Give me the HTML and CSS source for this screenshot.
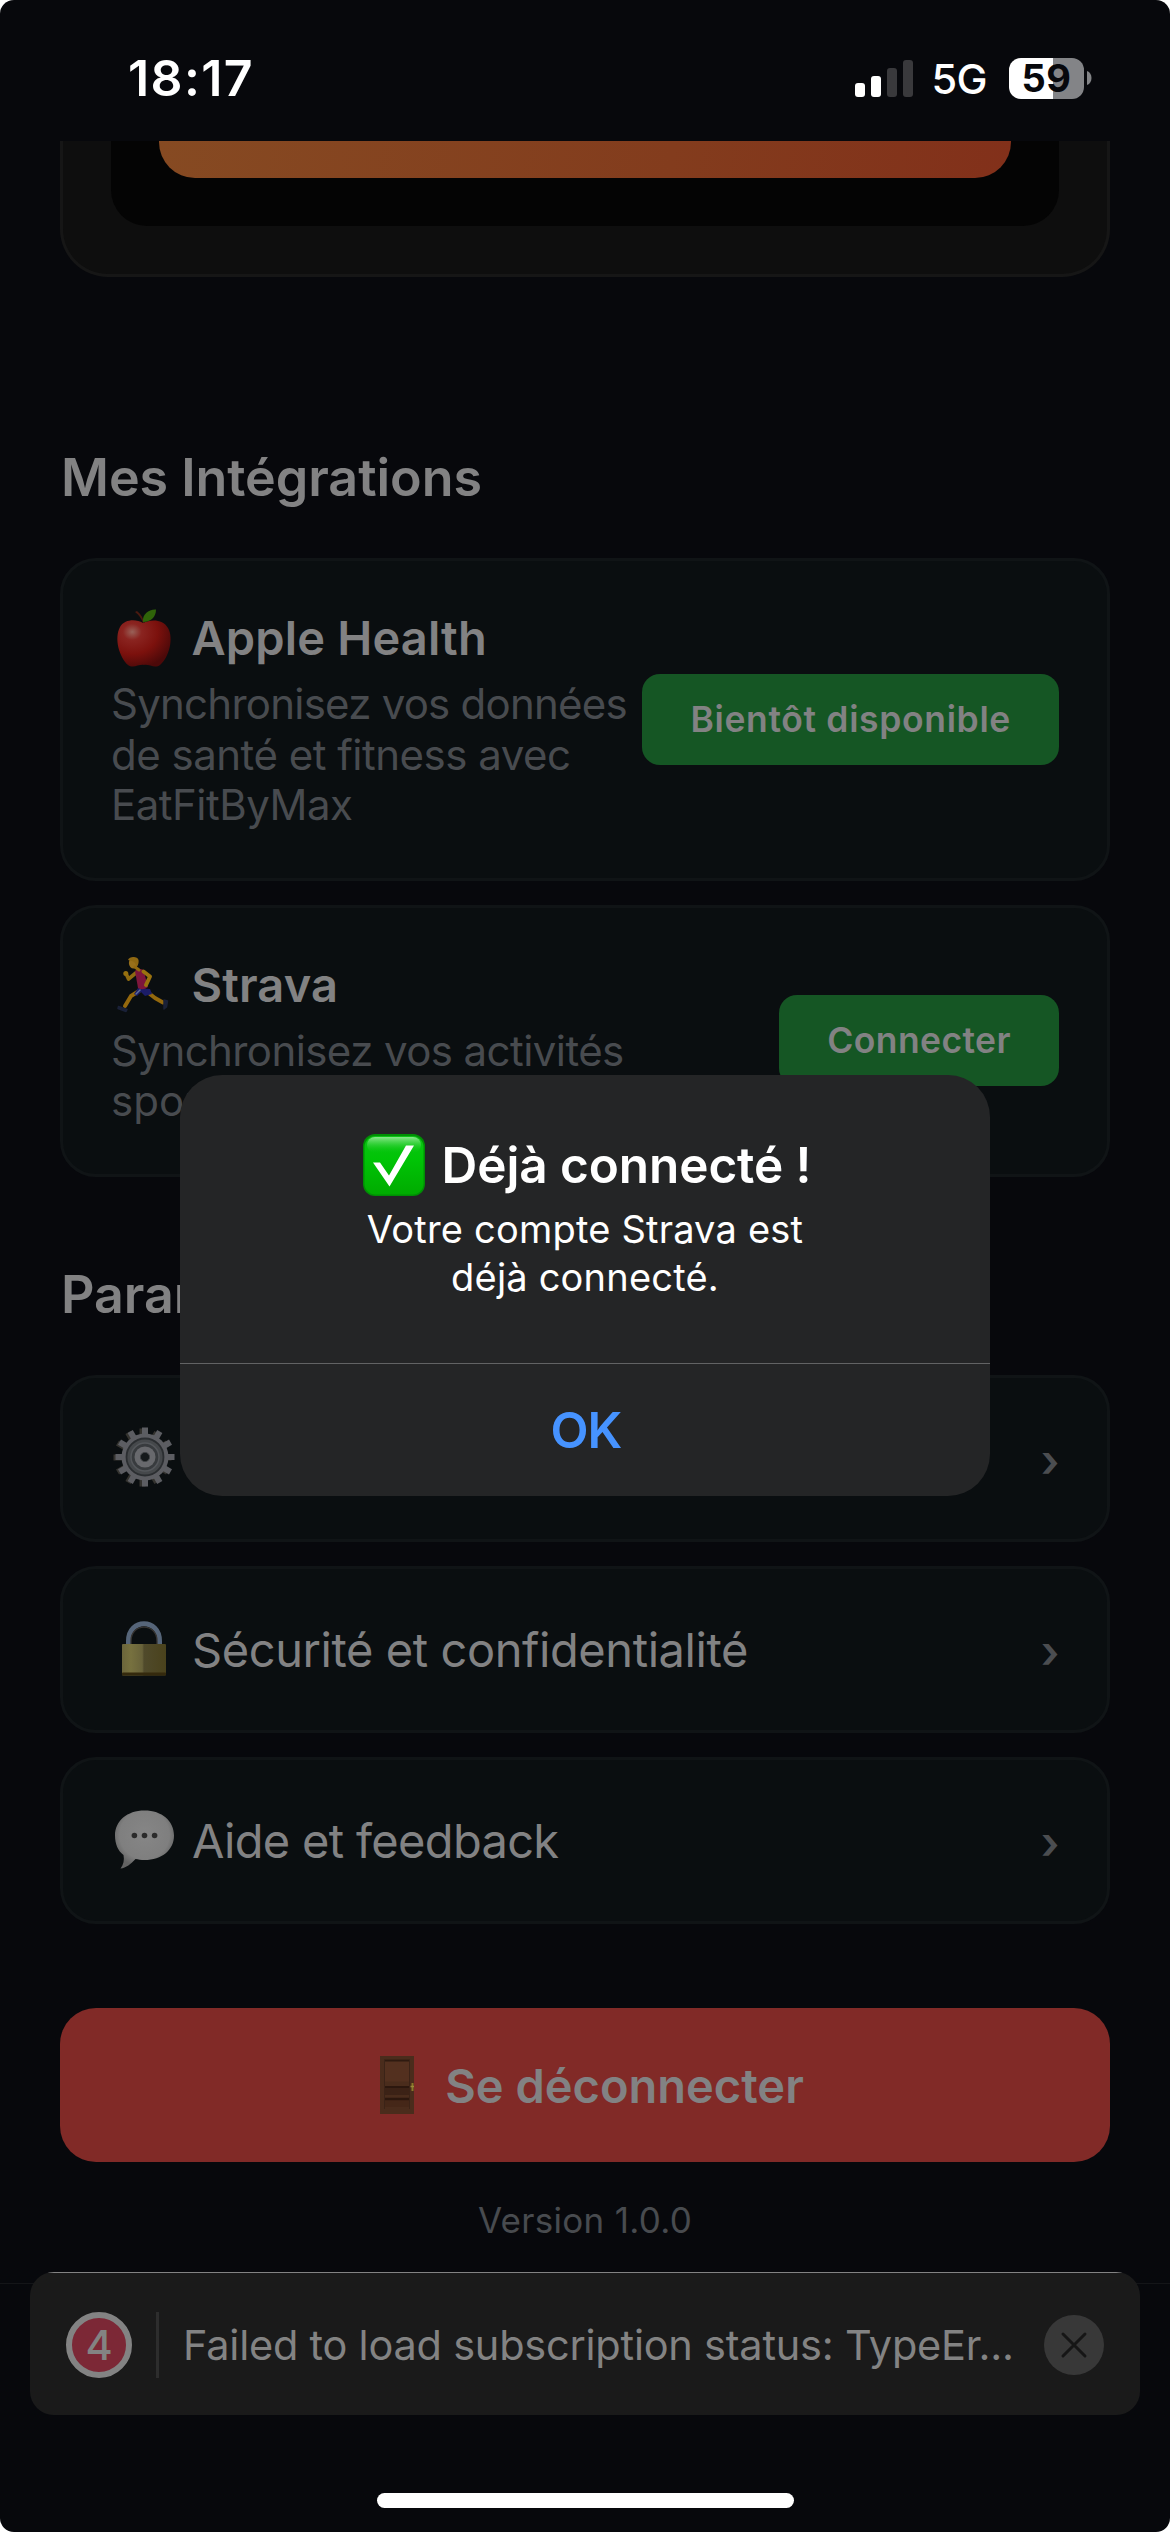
FILE: index.html
```html
<!DOCTYPE html>
<html lang="fr">
<head>
<meta charset="utf-8">
<title>EatFitByMax</title>
<link rel="stylesheet" href="styles.css">
</head>
<body>
<div class="screen">
  <header class="status">
    <span class="time">18:17</span>
    <div class="status-right">
      <svg class="signal" width="58" height="37" viewBox="0 0 58 37">
        <rect x="0" y="23" width="10" height="14" rx="3" fill="#fff"/>
        <rect x="16" y="16" width="10" height="21" rx="3" fill="#fff"/>
        <rect x="32" y="8" width="10" height="29" rx="3" fill="#39393c"/>
        <rect x="48" y="0" width="10" height="37" rx="3" fill="#39393c"/>
      </svg>
      <span class="network">5G</span>
      <span class="battery">59</span>
      <svg class="nub" width="5" height="14" viewBox="0 0 5 14"><path d="M0 0C6 2 6 12 0 14z" fill="#838487"/></svg>
    </div>
  </header>

  <main class="content">
    <section class="offer"><div class="offer-inner"><div class="offer-cta"></div></div></section>

    <h2 class="heading first">Mes Intégrations</h2>
    <div class="stack">
      <article class="card integration">
        <div class="info">
          <h3 class="title">
            <svg class="icon" viewBox="0 0 63 60">
              <defs>
                <radialGradient id="apple" cx=".28" cy=".25" r=".8"><stop offset="0" stop-color="#996158"/><stop offset=".22" stop-color="#8a2420"/><stop offset=".6" stop-color="#7c110d"/><stop offset="1" stop-color="#4c0909"/></radialGradient>
              </defs>
              <path d="M32 15C25 11 14 11 9 19C3 30 8 49 17 57C22 61 28 56 33 57C38 56 44 61 49 57C58 50 63 30 57 20C52 11 40 11 32 15z" fill="url(#apple)"/>
              <path d="M32 15C30 10 28 7 24 4L26 3C30 6 32 10 33.500 15z" fill="#4a1a10"/>
              <path d="M32 14C31 6 38 1 45 1.500C45 9 40 14 32 14z" fill="#2f6409"/>
            </svg>
            <span>Apple Health</span>
          </h3>
          <p class="desc"><span>Synchronisez vos données</span><br>de santé et fitness avec<br>EatFitByMax</p>
        </div>
        <button class="action soon">Bientôt disponible</button>
      </article>

      <article class="card integration">
        <div class="info">
          <h3 class="title">
            <svg class="icon" viewBox="0 0 63 60" fill="none" stroke-linecap="round" stroke-linejoin="round">
              <path d="M26 18L17.500 25L15 19.500" stroke="#8e6a10" stroke-width="3.600"/>
              <circle cx="14.800" cy="19.500" r="2.500" fill="#96700f"/>
              <path d="M28 37L20 42L14 52" stroke="#94680d" stroke-width="4"/>
              <path d="M37 38.500L44 44L52 48.500" stroke="#94680d" stroke-width="4"/>
              <path d="M7.500 52.500L16 55.500L15 57.500L7 54.500z" fill="#1a2138" stroke="#1a2138" stroke-width="1.500"/>
              <path d="M53 46L56.500 47L55.500 53L53 55z" fill="#1a2138" stroke="#1a2138" stroke-width="1.500"/>
              <path d="M27 34L39 35L41 40L34 42L30 38L26 42L23 40z" fill="#1b1c68"/>
              <path d="M29 36L25 40" stroke="#5e6f9b" stroke-width="1.500"/>
              <path d="M24 17Q28 13.500 32.500 16L37 33Q32 37 27 34z" fill="#7d163c"/>
              <path d="M32.500 17.500L39 22.500L35 31" stroke="#9a720f" stroke-width="4"/>
              <ellipse cx="22.500" cy="9" rx="4.600" ry="5.600" fill="#98701a"/>
              <path d="M17 6C18 2 27 2 27.500 6C28 9 27 12 25 12C25 9 23 7 17 6z" fill="#8f6812"/>
              <path d="M24 13L28 16" stroke="#93690f" stroke-width="3"/>
            </svg>
            <span>Strava</span>
          </h3>
          <p class="desc"><span class="activities">Synchronisez vos activités</span><br><span class="sport">sportives</span></p>
        </div>
        <button class="action">Connecter</button>
      </article>
    </div>

    <h2 class="heading second">Paramètres</h2>
    <nav class="stack">
      <a class="card row">
        <svg class="icon" viewBox="0 0 63 60">
          <g stroke="#34332f" stroke-width="6" transform="translate(-1.500 .5)"><path d="M33 0V58M4 29H62M18.500 4L47.500 54M47.500 4L18.500 54M8 14.500L58 43.500M58 14.500L8 43.500"/></g>
          <g stroke="#5c5d62" stroke-width="6"><path d="M34 -0.500V58.500M4.500 29H63.500M19.200 3.500L48.800 54.500M48.800 3.500L19.200 54.500M8.500 14.200L59.500 43.800M59.500 14.200L8.500 43.800"/></g>
          <circle cx="34" cy="29" r="23.500" fill="#5c5d62"/>
          <circle cx="34" cy="29" r="18.500" fill="#45484b" stroke="#2b2e31" stroke-width="1.800"/>
          <circle cx="34" cy="29" r="14" fill="#383b3e" stroke="#54575b" stroke-width="1.500"/>
          <circle cx="34" cy="29" r="10.500" fill="#68696d"/>
          <circle cx="34" cy="29" r="4.600" fill="#15191b" stroke="#3f4245" stroke-width="1"/>
        </svg>
        <span>Paramètres</span><span class="chevron">›</span>
      </a>
      <a class="card row">
        <svg class="icon" viewBox="0 0 63 60">
          <defs><linearGradient id="brass"><stop offset="0" stop-color="#6b653b"/><stop offset=".2" stop-color="#77713f"/><stop offset=".46" stop-color="#68623a"/><stop offset=".5" stop-color="#504a2b"/><stop offset="1" stop-color="#4a421c"/></linearGradient></defs>
          <path d="M17.500 27V22C17.500 -1 48.500 -1 48.500 22V27" fill="none" stroke="#566579" stroke-width="5"/>
          <path d="M20 27V22C20 3.500 46 3.500 46 22V27" fill="none" stroke="#383532" stroke-width="1.300"/>
          <rect x="11" y="25" width="44" height="31.500" rx="1" fill="url(#brass)"/>
          <rect x="11" y="53.500" width="44" height="3" rx="1" fill="#34290d"/>
        </svg>
        <span class="security">Sécurité et confidentialité</span><span class="chevron">›</span>
      </a>
      <a class="card row">
        <svg class="icon" viewBox="0 0 63 60">
          <defs><radialGradient id="bubble" cx=".5" cy=".42" r=".56"><stop offset="0" stop-color="#868686"/><stop offset=".75" stop-color="#7f7f7f"/><stop offset="1" stop-color="#636363"/></radialGradient></defs>
          <path d="M33.500 .5C51 .5 63 11 63 25.500C63 40 51 50 33.500 50C30 50 27 49.500 24.500 49C20 54 15 58 9.500 58.500C12.500 54.500 13.500 50 12.500 45C7 41 4 34 4 25.500C4 11 16 .5 33.500 .5z" fill="url(#bubble)"/>
          <g fill="#2b2b2b"><circle cx="23.400" cy="25.500" r="2.800"/><circle cx="33.500" cy="25.500" r="2.800"/><circle cx="43.600" cy="25.500" r="2.800"/></g>
        </svg>
        <span class="help">Aide et feedback</span><span class="chevron">›</span>
      </a>
    </nav>

    <button class="logout">
      <svg width="60" height="60" viewBox="0 0 60 60">
        <rect x="12" y="1" width="34" height="58" fill="#4a2c1c"/>
        <rect x="16.500" y="4.500" width="25" height="22" fill="#53301f"/><path d="M16.500 5.500H41.500" stroke="#2f1a10" stroke-width="2"/>
        <rect x="16.500" y="32" width="25" height="8" fill="#3c2216"/><path d="M16.500 32H41.500" stroke="#2c170e" stroke-width="2"/>
        <rect x="16.500" y="44" width="25" height="8" fill="#452718"/><path d="M16.500 44H41.500" stroke="#2c170e" stroke-width="2.500"/>
        <path d="M16.500 4.500V54M41.500 4.500V54" stroke="#3b2317" stroke-width="1"/>
        <path d="M44.500 28V36" stroke="#8a7728" stroke-width="2"/><path d="M42.500 31.500H46" stroke="#9a8a38" stroke-width="1.500"/>
      </svg>
      <span>Se déconnecter</span>
    </button>
    <p class="version">Version 1.0.0</p>
  </main>

  <div class="tab-edge"></div>

  <div class="toast">
    <span class="count">4</span>
    <span class="rule"></span>
    <span class="message">Failed to load subscription status: TypeEr...</span>
    <svg class="close" width="60" height="60" viewBox="0 0 60 60"><circle cx="30" cy="30" r="30" fill="#383838"/><path d="M19 19L41 41M41 19L19 41" stroke="#161616" stroke-width="3" stroke-linecap="round"/></svg>
  </div>

  <div class="dialog" role="alertdialog">
    <h1 class="dialog-title">
      <svg width="62" height="62" viewBox="0 0 62 62">
        <defs>
          <linearGradient id="tick" x2="0" y2="1"><stop offset="0" stop-color="#0bc414"/><stop offset=".4" stop-color="#00c406"/><stop offset="1" stop-color="#00ab00"/></linearGradient>
          <linearGradient id="gloss" x2="0" y2="1"><stop offset="0" stop-color="#8be88d"/><stop offset="1" stop-color="#10c916" stop-opacity="0"/></linearGradient>
        </defs>
        <rect width="62" height="62" rx="12" fill="#008f04"/>
        <rect x="1.500" y="2" width="59" height="58.500" rx="11" fill="url(#tick)"/>
        <rect x="4" y="3" width="54" height="16" rx="8" fill="url(#gloss)"/>
        <path d="M10 28.500H17L26 41.500L43 11.500H51L26.500 52.500z" fill="#fff"/>
      </svg>
      <span>Déjà connecté !</span>
    </h1>
    <p class="dialog-text">Votre compte Strava est<br>déjà connecté.</p>
    <button class="ok">OK</button>
  </div>

  <div class="home"></div>
</div>
</body>
</html>
```
FILE: styles.css
```css
* { box-sizing: border-box; margin: 0; padding: 0; }
body { background: #fff; font-family: Inter, "Liberation Sans", sans-serif; }
button { border: 0; font-family: inherit; }
svg { display: block; flex: none; overflow: visible; }

.screen {
  position: relative;
  width: 1170px;
  height: 2532px;
  overflow: hidden;
  border-radius: 14px;
  background: #07080c;
  color: #828283;
}

.status {
  display: flex;
  align-items: center;
  justify-content: space-between;
  height: 141px;
  padding: 15px 78px 0 128px;
  color: #fff;
}
.time { font-size: 50px; font-weight: 600; line-height: 60px; letter-spacing: 1.4px; }
.status-right { display: flex; align-items: center; }
.network { margin: 2px 22px 0 19px; font-size: 41.5px; font-weight: 500; line-height: 50px; letter-spacing: -.6px; }
.battery {
  width: 75px;
  height: 41px;
  border-radius: 12px;
  background: linear-gradient(90deg, #fff 44px, #838487 44px);
  color: #07080c;
  font-size: 38px;
  font-weight: 700;
  line-height: 41px;
  letter-spacing: .5px;
  text-align: center;
}
.nub { margin-left: 3px; }

.content { padding: 0 60px; }
.offer {
  height: 136px;
  padding: 0 48px 48px;
  border: 3px solid #161616;
  border-top: 0;
  border-radius: 0 0 48px 48px;
  background: #0e0e0e;
}
.offer-inner { height: 85px; padding: 0 48px; border-radius: 0 0 36px 36px; background: #040404; }
.offer-cta { height: 37px; border-radius: 0 0 36px 36px; background: linear-gradient(100deg, #864a22, #833c1d 60%, #82301a); }

.heading { margin-bottom: 48px; padding-left: 1px; font-size: 52px; font-weight: 600; line-height: 64px; letter-spacing: -.05px; }
.heading.first { margin-top: 169px; }
.heading.second { margin-top: 86px; }
.stack { display: flex; flex-direction: column; gap: 24px; }
.card { display: flex; align-items: center; border: 3px solid #101416; border-radius: 36px; background: #0a0e10; padding: 0 48px; }
.integration { justify-content: space-between; padding: 48px; }
.info { margin-right: -20px; white-space: nowrap; }
.icon { width: 63px; height: 60px; margin: -2px 17.5px -2px 0; }
.title { display: flex; align-items: center; height: 57px; font-size: 47px; font-weight: 600; line-height: 57px; letter-spacing: .15px; }
.desc { position: relative; top: 1px; margin-top: 12px; font-size: 42px; line-height: 50.5px; letter-spacing: -.5px; color: #484b4f; }
.desc span { letter-spacing: -.76px; }
.desc .activities { letter-spacing: -.58px; }
.desc .sport { letter-spacing: .1px; }
.action { height: 91px; padding: 0 48px; border-radius: 18px; background: #155624; color: #828283; font-size: 35.5px; font-weight: 600; letter-spacing: .4px; }
.action.soon { letter-spacing: .65px; }

.row { height: 167.2px; font-size: 47px; line-height: 57px; letter-spacing: -.42px; }
.row .icon { margin-right: 18px; }
.row .help { letter-spacing: -.68px; }
.chevron { margin: 4px 0 0 auto; color: #4b4d50; font-size: 45px; font-weight: 600; }

.logout {
  display: flex;
  align-items: center;
  justify-content: center;
  gap: 17px;
  width: 100%;
  height: 154px;
  margin-top: 84px;
  padding-left: 2px;
  border-radius: 36px;
  background: #812a27;
  color: #828283;
  font-size: 47px;
  font-weight: 600;
}
.version { margin-top: 36px; text-align: center; font-size: 35px; line-height: 44px; letter-spacing: .3px; color: #484b4f; }

.tab-edge { position: absolute; left: 0; top: 2283px; width: 100%; height: 1px; background: #141518; }
.toast {
  position: absolute;
  left: 30px;
  top: 2272px;
  width: 1110px;
  height: 143px;
  display: flex;
  align-items: center;
  padding: 3px 36px 0;
  border-radius: 24px;
  background: linear-gradient(#838383 1px, #1a1a1a 1px);
  font-size: 41.5px;
  line-height: 50px;
  color: #838383;
}
.count {
  width: 66px;
  height: 66px;
  border: 6px solid #838383;
  border-radius: 50%;
  background: #7c2836;
  font-weight: 500;
  line-height: 54px;
  text-align: center;
}
.rule { width: 3px; height: 66px; margin-left: 24px; background: #2d2d2d; }
.message { margin-left: 24px; letter-spacing: -.23px; white-space: nowrap; }
.close { margin-left: auto; }

.dialog {
  position: absolute;
  left: 180px;
  top: 1075px;
  width: 810px;
  height: 421px;
  display: flex;
  flex-direction: column;
  padding-top: 60px;
  border-radius: 42px;
  background: #242526;
  color: #fff;
  text-align: center;
}
.dialog-title { display: flex; align-items: center; justify-content: center; gap: 17px; height: 60px; padding-left: 4px; font-size: 49.5px; font-weight: 600; line-height: 60px; letter-spacing: -.09px; }
.dialog-text { margin-top: 10px; font-size: 38px; line-height: 48px; letter-spacing: .2px; }
.ok { margin-top: auto; height: 133px; padding-left: 2px; border-top: 1px solid #626364; background: none; color: #4693ff; font-size: 49.5px; font-weight: 600; letter-spacing: -1px; }

.home { position: absolute; left: 377px; top: 2493px; width: 417px; height: 15px; border-radius: 8px; background: #fff; }
```
